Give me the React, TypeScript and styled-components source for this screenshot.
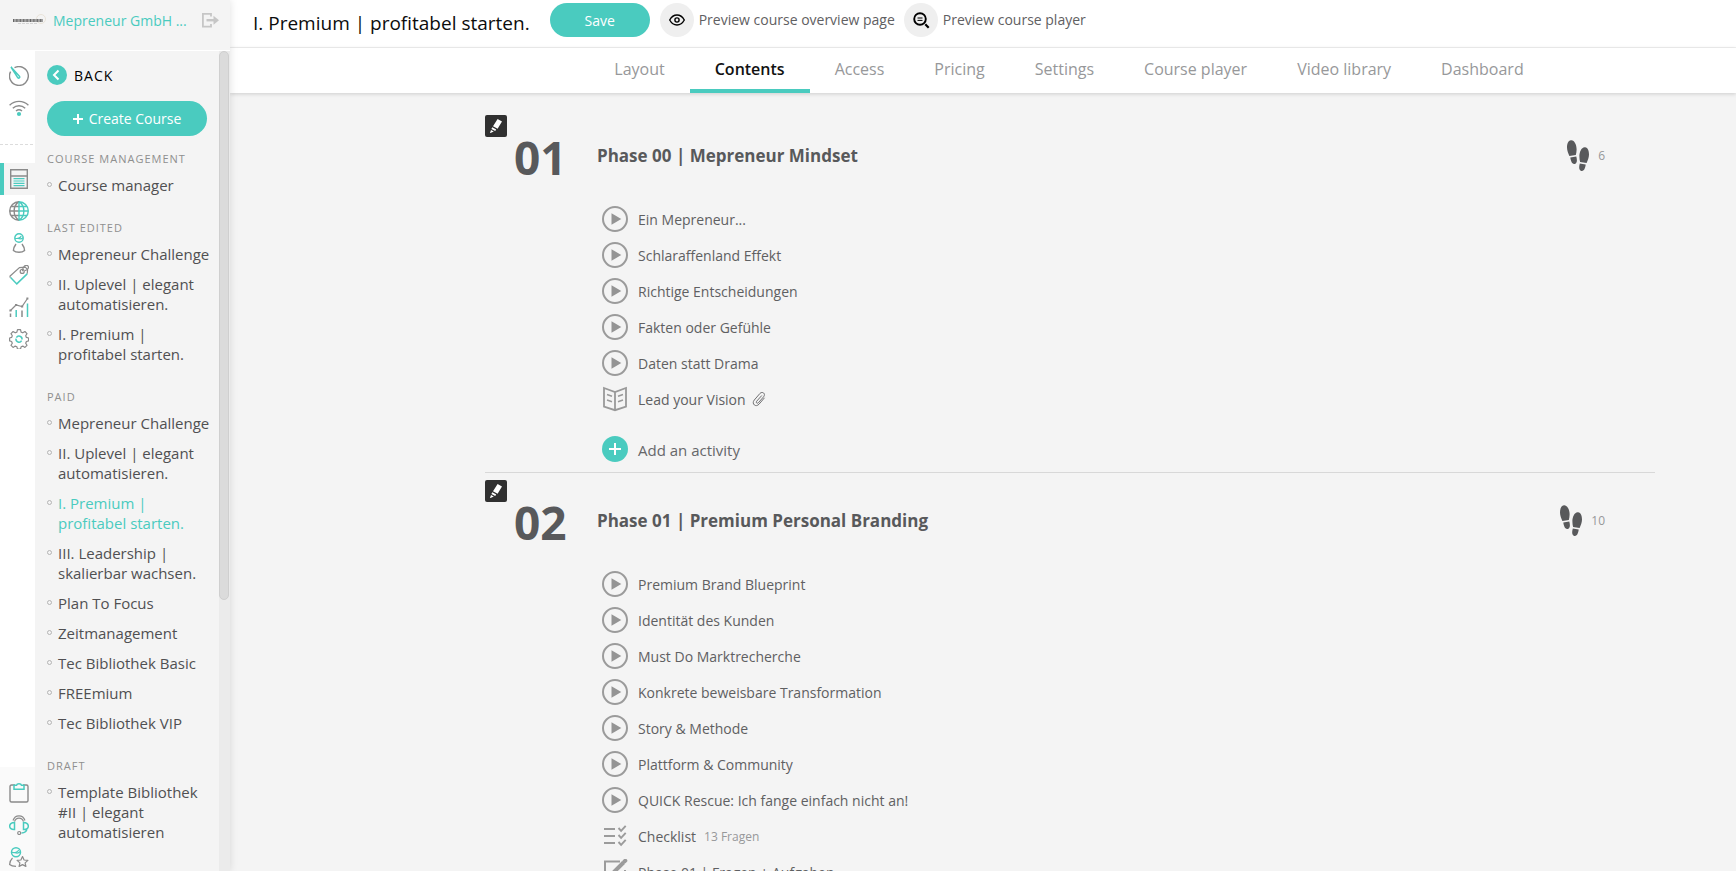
import React from "react";
import styled, { createGlobalStyle } from "styled-components";

const teal = "#4acbbf";
const iconGrey = "#8b8b8b";

const GlobalStyle = createGlobalStyle`
  *, *::before, *::after { box-sizing: border-box; }
  body {
    margin: 0;
    background: #f4f4f4;
    color: #5f6062;
    font-family: "Open Sans", "Noto Sans", sans-serif;
    font-size: 14px;
    line-height: 20px;
  }
  button { font-family: inherit; border: 0; padding: 0; background: none; cursor: pointer; }
  a { color: inherit; text-decoration: none; }
  ul { list-style: none; margin: 0; padding: 0; }
  h1, h2, h3 { margin: 0; }
  svg { display: block; flex: none; }
`;

/* ---------- shell ---------- */

const Shell = styled.div`
  display: grid;
  grid-template-columns: 230px 1fr;
  height: 100vh;
  overflow: hidden;
`;

const Side = styled.aside`
  display: flex;
  flex-direction: column;
  min-height: 0;
  background: #f4f4f4;
  box-shadow: 0 0 8px rgba(0, 0, 0, 0.12);
  z-index: 1;
`;

const SideHead = styled.header`
  display: flex;
  align-items: center;
  height: 50px;
  padding: 0 11px 10px 12px;
  gap: 7px;
  flex: none;
`;

const Account = styled.a`
  flex: 1;
  padding-top: 2px;
  color: ${teal};
  white-space: nowrap;
`;

const SideBody = styled.div`
  display: grid;
  grid-template-columns: 35px 1fr 11px;
  flex: 1;
  min-height: 0;
  border-top: 1px solid #fff;
`;

const Rail = styled.nav`
  display: flex;
  flex-direction: column;
  justify-content: space-between;
  min-height: 0;
  background: #fff;
`;

const RailTop = styled.div`
  padding-top: 9px;
`;

const RailBottom = styled.div`
  padding-top: 10px;
  height: 104px;
  background: #fafafa;
`;

const RailLink = styled.a<{ $active?: boolean }>`
  display: flex;
  align-items: center;
  justify-content: center;
  height: 32px;
  padding-right: ${(p) => (p.$active ? "1px" : "0")};
  padding-left: ${(p) => (p.$active ? "0" : "3px")};
  border-left: ${(p) => (p.$active ? `4px solid ${teal}` : "0")};
  background: ${(p) => (p.$active ? "#f4f4f4" : "transparent")};
`;

const RailRule = styled.hr`
  width: 33px;
  margin: 20px 0 18px;
  border: 0;
  border-top: 1px dashed #dcdcdc;
`;

const Menu = styled.nav`
  padding: 14px 0 0 12px;
  overflow: hidden;
`;

const Track = styled.div`
  background: #ebebeb;
`;

const Thumb = styled.div`
  width: 10px;
  height: 67%;
  border: 1px solid #cfcfcf;
  border-radius: 5px;
  background: #dbdbdb;
`;

const Back = styled.button`
  display: flex;
  align-items: center;
  gap: 7px;
  height: 20px;
  color: #000;
  font-size: 14px;
  font-weight: 500;
  letter-spacing: 1px;
`;

const Create = styled.button`
  display: flex;
  align-items: center;
  justify-content: center;
  gap: 6px;
  width: 160px;
  height: 35px;
  margin: 16px 0 15px;
  border-radius: 18px;
  background: ${teal};
  color: #fff;
  font-size: 14px;
`;

const Group = styled.section`
  margin-bottom: 25px;
`;

const GroupTitle = styled.h3`
  margin-bottom: 8px;
  color: #8f8f8f;
  font-size: 11px;
  line-height: 16px;
  font-weight: 500;
  letter-spacing: 1px;
  text-transform: uppercase;
`;

const GroupList = styled.ul`
  display: grid;
  gap: 10px;
`;

const Course = styled.li<{ $current?: boolean }>`
  display: grid;
  grid-template-columns: 5px 154px;
  gap: 6px;
  color: ${(p) => (p.$current ? teal : "#505052")};
  font-size: 15px;

  &::before {
    content: "";
    width: 5px;
    height: 5px;
    margin-top: 7px;
    border: 1px solid #b4b4b4;
    border-radius: 50%;
  }
`;

/* ---------- main ---------- */

const Main = styled.main`
  display: flex;
  flex-direction: column;
  min-width: 0;
  min-height: 0;
`;

const TopBar = styled.header`
  display: flex;
  align-items: center;
  height: 48px;
  padding: 0 23px 7px;
  border-bottom: 1px solid #f0f0f0;
  background: #fff;
  flex: none;
`;

const Title = styled.h1`
  padding-top: 5px;
  margin-right: 20px;
  color: #0c0c0c;
  font-size: 19px;
  line-height: 26px;
  font-weight: 400;
  white-space: nowrap;
`;

const Save = styled.button`
  width: 100px;
  height: 34px;
  margin-right: 10px;
  border-radius: 17px;
  background: ${teal};
  color: #fff;
  font-size: 14px;
`;

const Preview = styled.a`
  display: flex;
  align-items: center;
  gap: 5px;
  margin-right: 9px;
  white-space: nowrap;
`;

const Disc = styled.span`
  display: grid;
  place-items: center;
  width: 34px;
  height: 34px;
  border-radius: 50%;
  background: #efefef;
`;

const Tabs = styled.nav`
  display: flex;
  justify-content: center;
  height: 45px;
  padding-left: 172px;
  background: #fff;
  box-shadow: 0 1px 4px rgba(0, 0, 0, 0.16);
  flex: none;
`;

const Tab = styled.a<{ $active?: boolean }>`
  padding: 10px 25px 0;
  border-bottom: 4px solid ${(p) => (p.$active ? teal : "transparent")};
  color: ${(p) => (p.$active ? "#111" : "#97989a")};
  font-size: 16px;
  line-height: 22px;
  font-weight: ${(p) => (p.$active ? 600 : 400)};
  white-space: nowrap;
`;

const Body = styled.div`
  flex: 1;
  min-height: 0;
  padding: 15px 0 0 174px;
  overflow: hidden;
`;

const Chapters = styled.div`
  max-width: 1170px;
  margin: 0 auto;
`;

const Chapter = styled.section`
  padding: 7px 0 5px;
  border-bottom: 1px solid #d8d8d8;
`;

const Edit = styled.button`
  display: grid;
  place-items: center;
  width: 22px;
  height: 22px;
  border-radius: 2px;
  background: #303030;
`;

const ChapterHead = styled.header`
  display: grid;
  grid-template-columns: 83px 1fr auto;
  align-items: center;
  height: 38px;
  margin-bottom: 26px;
  padding: 0 50px 0 29px;
  color: #58595b;
`;

const Num = styled.span`
  padding-top: 3px;
  font-size: 46px;
  line-height: 35px;
  font-weight: 700;
`;

const ChapterTitle = styled.h2`
  font-size: 17px;
  line-height: 24px;
  font-weight: 700;
`;

const Steps = styled.span`
  display: flex;
  align-items: center;
  gap: 9px;
  color: #97989a;
  font-size: 12px;
`;

const Activities = styled.ul`
  padding-left: 117px;
`;

const Activity = styled.li`
  display: flex;
  align-items: center;
  gap: 10px;
  height: 36px;
`;

const ActivityName = styled.a`
  display: flex;
  align-items: center;
  gap: 6px;
  padding-top: 2px;
`;

const Meta = styled.span`
  margin-left: 2px;
  color: #97989a;
  font-size: 12px;
`;

const Add = styled.button`
  display: flex;
  align-items: center;
  gap: 10px;
  height: 36px;
  margin: 14px 0 0 117px;
  color: #66676a;
  font-size: 15px;
`;

const AddLabel = styled.span`
  padding-top: 2px;
`;

/* ---------- drawings ---------- */

const Ic = ({ children }: { children: React.ReactNode }) => (
  <svg width="20" height="20" viewBox="0 0 20 20" fill="none" stroke={iconGrey} strokeWidth="1.2" aria-hidden="true">
    {children}
  </svg>
);

const Gauge = () => (
  <Ic>
    <path d="M5.500 1.700A9.400 9.400 0 1 1 1.600 5.600" strokeWidth="1.400" />
    <path d="M2 1l8.600 9.500c.7 1-.8 2.200-1.800 1.300z" stroke={teal} strokeWidth="1.500" />
  </Ic>
);
const Wifi = () => (
  <Ic>
    <path d="M.6 7.200a13.500 13.500 0 0 1 18.800 0M3.800 10.200a9 9 0 0 1 12.400 0M7 13a4.600 4.600 0 0 1 6 0" strokeWidth="1.400" />
    <circle cx="10" cy="16" r="2.100" fill={teal} stroke="none" />
  </Ic>
);
const Courses = () => (
  <Ic>
    <path d="M1.700.700h16.600v18.600H1.700zM1.700 7h16.600" strokeWidth="1.400" />
    <path d="M4.500 9.700h11M4.500 12h11M4.500 14.300h11M4.500 16.700h11" stroke={teal} />
  </Ic>
);
const Globe = () => (
  <Ic>
    <path d="M10 .7a9.300 9.300 0 0 0 0 18.600M10 .7C3.500 5 3.500 15 10 19.300M.7 10H10M2 5.500h8M2 14.500h8" strokeWidth="1.400" />
    <path d="M10 .7a9.300 9.300 0 0 1 0 18.600M10 .7c6.500 4.300 6.500 14.300 0 18.600M10 .7v18.600M10 10h9.300M10 5.500h8M10 14.500h8" stroke={teal} strokeWidth="1.400" />
  </Ic>
);
const Person = () => (
  <Ic>
    <circle cx="10" cy="5" r="4.200" stroke={teal} strokeWidth="1.400" />
    <path d="M6 5.200c2.500.8 5.500-.3 6.200-2.200M9 5.500c2 .6 4 .4 5-.9" stroke={teal} />
    <path d="M7 11c-1.500 2-2.500 4-2.600 6.500 2.600 2.400 8.600 2.400 11.200 0C15.500 15 14.500 13 13 11" strokeWidth="1.400" />
  </Ic>
);
const Tag = () => (
  <Ic>
    <path d="M.6 11.500L10.500 2.600l5.800-.4 2.300 2.400-.4 4.200M.6 11.500l1 1" />
    <circle cx="13.200" cy="6.400" r="2" />
    <path d="M13.500 6.200c.2-5 3-6.500 5-5.600 2 1.500.5 4.500-2.700 5" />
    <path d="M1.600 12.500l6.200 6.400 10.400-10" stroke={teal} strokeWidth="1.500" />
  </Ic>
);
const Chart = () => (
  <Ic>
    <path d="M1.500 13.500l5.500-5.500 6 1.500 5.500-8" />
    <path d="M.4 13.500h2.200M6 8h2.200M12 9.500h2.200M17.400 1.500h2" strokeWidth="2.200" />
    <path d="M1.500 16.500V20M13 13.500V20" strokeWidth="1.500" />
    <path d="M7.200 13v7M18.500 6.500V20" stroke={teal} strokeWidth="1.500" />
  </Ic>
);
const Gear = () => (
  <Ic>
    <path d="M8.500.7h3l.6 2.400 1.700.7 2.100-1.300 2.100 2.100-1.300 2.100.7 1.700 2.200.6v2.900l-2.200.6-.7 1.700 1.300 2.100-2.100 2.100-2.100-1.300-1.700.7-.6 2.300h-3l-.6-2.300-1.700-.7-2.100 1.300L2 16.300l1.300-2.100-.7-1.700-2-.6V9l2-.6.7-1.700L2 4.600l2.100-2.100 2.100 1.300 1.700-.7z" strokeLinejoin="round" />
    <path d="M7.400 8.600A3 3 0 0 1 13 10.500M12.600 11.600A3 3 0 0 1 7 9.700" stroke={teal} strokeWidth="1.500" />
  </Ic>
);
const Clipboard = () => (
  <Ic>
    <path d="M6 2H2.500Q1 2 1 3.500v14Q1 19 2.500 19h15q1.500 0 1.500-1.500v-14Q19 2 17.500 2H14" strokeWidth="1.400" />
    <path d="M5 6.300V2.200h2.500C8 .3 12 .3 12.500 2.200H15v4.100z" stroke={teal} strokeWidth="1.500" />
  </Ic>
);
const Headset = () => (
  <Ic>
    <path d="M4 5.500C6-.8 14-.8 16 5.500M5.500 6.500C7 2 13 2 14.500 6.500" />
    <path d="M5.500 7.500v7C-.9 15-1 7.500 5.500 7.500zM14.500 7.500v7c6.400.5 6.500-7 0-7zM18 13.500c-.3 3-2.500 4.300-5.500 4.400" stroke={teal} strokeWidth="1.500" />
    <circle cx="10.200" cy="18" r="1.500" />
  </Ic>
);
const PersonStar = () => (
  <Ic>
    <circle cx="7" cy="5.300" r="4.500" stroke={teal} strokeWidth="1.500" />
    <path d="M2.700 5.200c3 1 6-.2 7-2.200M6 5.700c2 .6 4 .3 5.300-1" stroke={teal} />
    <path d="M3.500 11c-2 2-2.800 4-2.900 6.500 1.500 1.300 4 1.800 6.400 1.800" />
    <path d="M13.500 9.600l1.600 3.400 3.800.4-2.800 2.500.8 3.500-3.400-1.800-3.400 1.800.8-3.500-2.800-2.500 3.800-.4z" strokeLinejoin="round" />
  </Ic>
);

const BrandMark = () => (
  <svg width="34" height="14" viewBox="0 0 34 14" aria-hidden="true">
    <circle cx="29" cy="6" r="4.500" fill="none" stroke="#e9e3d9" />
    <path d="M1 7.500h30" stroke="#a2a2a2" strokeWidth="3" />
    <path d="M1 7.500h30" stroke="#666" strokeWidth="3" strokeDasharray="1 2.400" />
    <path d="M6 10.500h20" stroke="#d4d4d4" strokeWidth="1" strokeDasharray="3 1" />
  </svg>
);
const Logout = () => (
  <svg width="17" height="15" viewBox="0 0 17 15" fill="none" stroke="#c6c6c6" strokeWidth="1.800" aria-hidden="true">
    <path d="M9 3.500V.9H.9v12.700H9V11" />
    <path d="M4.500 7.200h9" strokeWidth="2.400" />
    <path d="M11.500 2.700L17 7.200l-5.500 4.500z" fill="#c6c6c6" stroke="none" />
  </svg>
);
const BackDisc = () => (
  <svg width="20" height="20" viewBox="0 0 20 20" aria-hidden="true">
    <circle cx="10" cy="10" r="10" fill={teal} />
    <path d="M11.500 5.500L7 10l4.500 4.500" fill="none" stroke="#fff" strokeWidth="2" />
  </svg>
);
const SmallPlus = () => (
  <svg width="10" height="10" viewBox="0 0 10 10" stroke="#fff" strokeWidth="2" aria-hidden="true">
    <path d="M5 0v10M0 5h10" />
  </svg>
);
const Eye = () => (
  <svg width="16" height="12" viewBox="0 0 16 12" fill="none" stroke="#000" strokeWidth="1.400" aria-hidden="true">
    <path d="M.7 6C4.300-.6 11.700-.6 15.300 6 11.700 12.600 4.300 12.600.7 6z" />
    <circle cx="8" cy="6" r="2.100" />
  </svg>
);
const Magnifier = () => (
  <svg width="18" height="18" viewBox="0 0 18 18" fill="none" stroke="#000" aria-hidden="true">
    <circle cx="8" cy="8" r="5.800" strokeWidth="1.900" />
    <path d="M5.500 7h5M5.500 9.400h5" strokeWidth="1" />
    <path d="M13.300 13.300l3.400 3.400" strokeWidth="2.200" />
  </svg>
);
const Marker = () => (
  <svg width="14" height="16" viewBox="0 0 14 16" fill="#fff" aria-hidden="true">
    <path d="M8.600 1l4.400 2.500-4.400 7.300-4.600-2.600zM3.300 9.300l3.900 2.200-1 1.500-3.800-2.100zM2 12l2.800 1.600L1.500 15H1z" />
  </svg>
);
const Footsteps = () => (
  <svg width="22" height="32" viewBox="0 0 22 32" fill="#58595b" aria-hidden="true">
    <path d="M4 .2c3.500-.4 5.800 5 5.600 9.500 0 2-.4 3.600-.8 5.200l-6.400 1.200C1.300 13.500 0 10.500 0 7.500 0 4 1 .5 4 .2zM3.300 17.600l6-1.200c.8 3 1.200 6.600-1.500 7.500-3 .6-4-3-4.500-6.300z" />
    <path d="M18 7.200c-3.500-.4-5.800 5-5.600 9.500 0 2 .3 3.600.7 5.200l6.500 1.200c1.100-2.600 2.400-5.600 2.400-8.600 0-3.500-1-7-4-7.300zM18.700 24.600l-5.900-1.200c-.8 3-1.200 6.600 1.500 7.500 3 .6 4-3 4.400-6.300z" />
  </svg>
);
const Play = () => (
  <svg width="26" height="26" viewBox="0 0 26 26" aria-hidden="true">
    <circle cx="13" cy="13" r="12" fill="none" stroke="#9b9b9b" strokeWidth="2" />
    <path d="M9.500 7.300l9.800 5.700-9.800 5.700z" fill="#949494" />
  </svg>
);
const Book = () => (
  <svg width="26" height="26" viewBox="0 0 26 26" fill="none" stroke="#999" strokeWidth="1.800" aria-hidden="true">
    <path d="M2 2l11 4 11-4v18.500l-11 3.700-11-3.700zM13 6v18" />
    <path d="M5 8.500l5 1.700M5 14l5 1.700M16 10.200l5-1.700M16 15.700l5-1.700" strokeWidth="1.500" />
  </svg>
);
const Checks = () => (
  <svg width="26" height="26" viewBox="0 0 26 26" fill="none" stroke="#9b9b9b" strokeWidth="1.900" aria-hidden="true">
    <path d="M2 6h11M2 13h11M2 20h11" />
    <path d="M16.500 5l2.600 2.800 4.600-5M16.500 12l2.600 2.800 4.600-5M16.500 19l2.600 2.800 4.600-5" />
  </svg>
);
const Compose = () => (
  <svg width="26" height="26" viewBox="0 0 26 26" fill="none" stroke="#9b9b9b" strokeWidth="2" aria-hidden="true">
    <path d="M18 2.500H3V24h20V11" />
    <path d="M11 14L21.500 3.500" strokeWidth="4" />
    <path d="M22.300 2.700l1-1" strokeWidth="4" strokeLinecap="round" />
    <path d="M9 13.500l-1.500 5 5-1.500z" fill="#9b9b9b" stroke="none" />
  </svg>
);
const Clip = () => (
  <svg width="14" height="16" viewBox="0 0 14 16" fill="none" stroke="#707072" strokeWidth="1" aria-hidden="true">
    <path d="M9.800 3.500L4.600 9.300c-1 1.300.6 2.600 1.700 1.500l5.300-6c2.500-3-1.200-6-3.700-3.300L2.300 8c-3.200 3.800 1.500 7.800 4.700 4.200l5.500-6.400" />
  </svg>
);
const AddDisc = () => (
  <svg width="26" height="26" viewBox="0 0 26 26" aria-hidden="true">
    <circle cx="13" cy="13" r="13" fill={teal} />
    <path d="M13 7v12M7 13h12" stroke="#fff" strokeWidth="2" />
  </svg>
);

/* ---------- data ---------- */

const groups = [
  { title: "Course management", items: ["Course manager"] },
  { title: "Last edited", items: ["Mepreneur Challenge", "II. Uplevel | elegant automatisieren.", "I. Premium | profitabel starten."] },
  {
    title: "Paid",
    current: 2,
    items: [
      "Mepreneur Challenge",
      "II. Uplevel | elegant automatisieren.",
      "I. Premium | profitabel starten.",
      "III. Leadership | skalierbar wachsen.",
      "Plan To Focus",
      "Zeitmanagement",
      "Tec Bibliothek Basic",
      "FREEmium",
      "Tec Bibliothek VIP",
    ],
  },
  { title: "Draft", items: ["Template Bibliothek #II | elegant automatisieren"] },
];

const tabs = ["Layout", "Contents", "Access", "Pricing", "Settings", "Course player", "Video library", "Dashboard"];

type Kind = "play" | "book" | "checks" | "compose";
type Item = { name: string; kind?: Kind; meta?: string; clip?: boolean };

const chapters: { title: string; steps: number; items: Item[] }[] = [
  {
    title: "Phase 00 | Mepreneur Mindset",
    steps: 6,
    items: [
      { name: "Ein Mepreneur..." },
      { name: "Schlaraffenland Effekt" },
      { name: "Richtige Entscheidungen" },
      { name: "Fakten oder Gefühle" },
      { name: "Daten statt Drama" },
      { name: "Lead your Vision", kind: "book", clip: true },
    ],
  },
  {
    title: "Phase 01 | Premium Personal Branding",
    steps: 10,
    items: [
      { name: "Premium Brand Blueprint" },
      { name: "Identität des Kunden" },
      { name: "Must Do Marktrecherche" },
      { name: "Konkrete beweisbare Transformation" },
      { name: "Story & Methode" },
      { name: "Plattform & Community" },
      { name: "QUICK Rescue: Ich fange einfach nicht an!" },
      { name: "Checklist", kind: "checks", meta: "13 Fragen" },
      { name: "Phase 01 | Fragen + Aufgaben", kind: "compose" },
    ],
  },
];

const kinds: Record<Kind, React.FC> = { play: Play, book: Book, checks: Checks, compose: Compose };

const railTop: [string, React.FC][] = [
  ["Courses", Courses],
  ["Website", Globe],
  ["Users", Person],
  ["Sales", Tag],
  ["Statistics", Chart],
  ["Settings", Gear],
];

export default function App() {
  return (
    <>
      <GlobalStyle />
      <Shell>
        <Side>
          <SideHead>
            <BrandMark />
            <Account href="#">Mepreneur GmbH ...</Account>
            <button aria-label="Log out">
              <Logout />
            </button>
          </SideHead>
          <SideBody>
            <Rail aria-label="Areas">
              <RailTop>
                <RailLink href="#" aria-label="Dashboard"><Gauge /></RailLink>
                <RailLink href="#" aria-label="Live"><Wifi /></RailLink>
                <RailRule />
                {railTop.map(([label, Icon], i) => (
                  <RailLink key={label} href="#" aria-label={label} $active={i === 0}>
                    <Icon />
                  </RailLink>
                ))}
              </RailTop>
              <RailBottom>
                <RailLink href="#" aria-label="Tasks"><Clipboard /></RailLink>
                <RailLink href="#" aria-label="Support"><Headset /></RailLink>
                <RailLink href="#" aria-label="Profile"><PersonStar /></RailLink>
              </RailBottom>
            </Rail>
            <Menu aria-label="Courses">
              <Back>
                <BackDisc />
                BACK
              </Back>
              <Create>
                <SmallPlus />
                Create Course
              </Create>
              {groups.map((g) => (
                <Group key={g.title}>
                  <GroupTitle>{g.title}</GroupTitle>
                  <GroupList>
                    {g.items.map((item, i) => (
                      <Course key={item} $current={g.current === i}>
                        <a href="#">{item}</a>
                      </Course>
                    ))}
                  </GroupList>
                </Group>
              ))}
            </Menu>
            <Track>
              <Thumb />
            </Track>
          </SideBody>
        </Side>
        <Main>
          <TopBar>
            <Title>I. Premium | profitabel starten.</Title>
            <Save>Save</Save>
            <Preview href="#">
              <Disc><Eye /></Disc>
              Preview course overview page
            </Preview>
            <Preview href="#">
              <Disc><Magnifier /></Disc>
              Preview course player
            </Preview>
          </TopBar>
          <Tabs aria-label="Course sections">
            {tabs.map((t) => (
              <Tab key={t} href="#" $active={t === "Contents"}>
                {t}
              </Tab>
            ))}
          </Tabs>
          <Body>
            <Chapters>
              {chapters.map((c, i) => (
                <Chapter key={c.title}>
                  <Edit aria-label={`Edit ${c.title}`}>
                    <Marker />
                  </Edit>
                  <ChapterHead>
                    <Num>{`0${i + 1}`}</Num>
                    <ChapterTitle>{c.title}</ChapterTitle>
                    <Steps>
                      <Footsteps />
                      {c.steps}
                    </Steps>
                  </ChapterHead>
                  <Activities>
                    {c.items.map((a) => {
                      const Icon = kinds[a.kind ?? "play"];
                      return (
                        <Activity key={a.name}>
                          <Icon />
                          <ActivityName href="#">
                            {a.name}
                            {a.clip && <Clip />}
                            {a.meta && <Meta>{a.meta}</Meta>}
                          </ActivityName>
                        </Activity>
                      );
                    })}
                  </Activities>
                  <Add>
                    <AddDisc />
                    <AddLabel>Add an activity</AddLabel>
                  </Add>
                </Chapter>
              ))}
            </Chapters>
          </Body>
        </Main>
      </Shell>
    </>
  );
}
